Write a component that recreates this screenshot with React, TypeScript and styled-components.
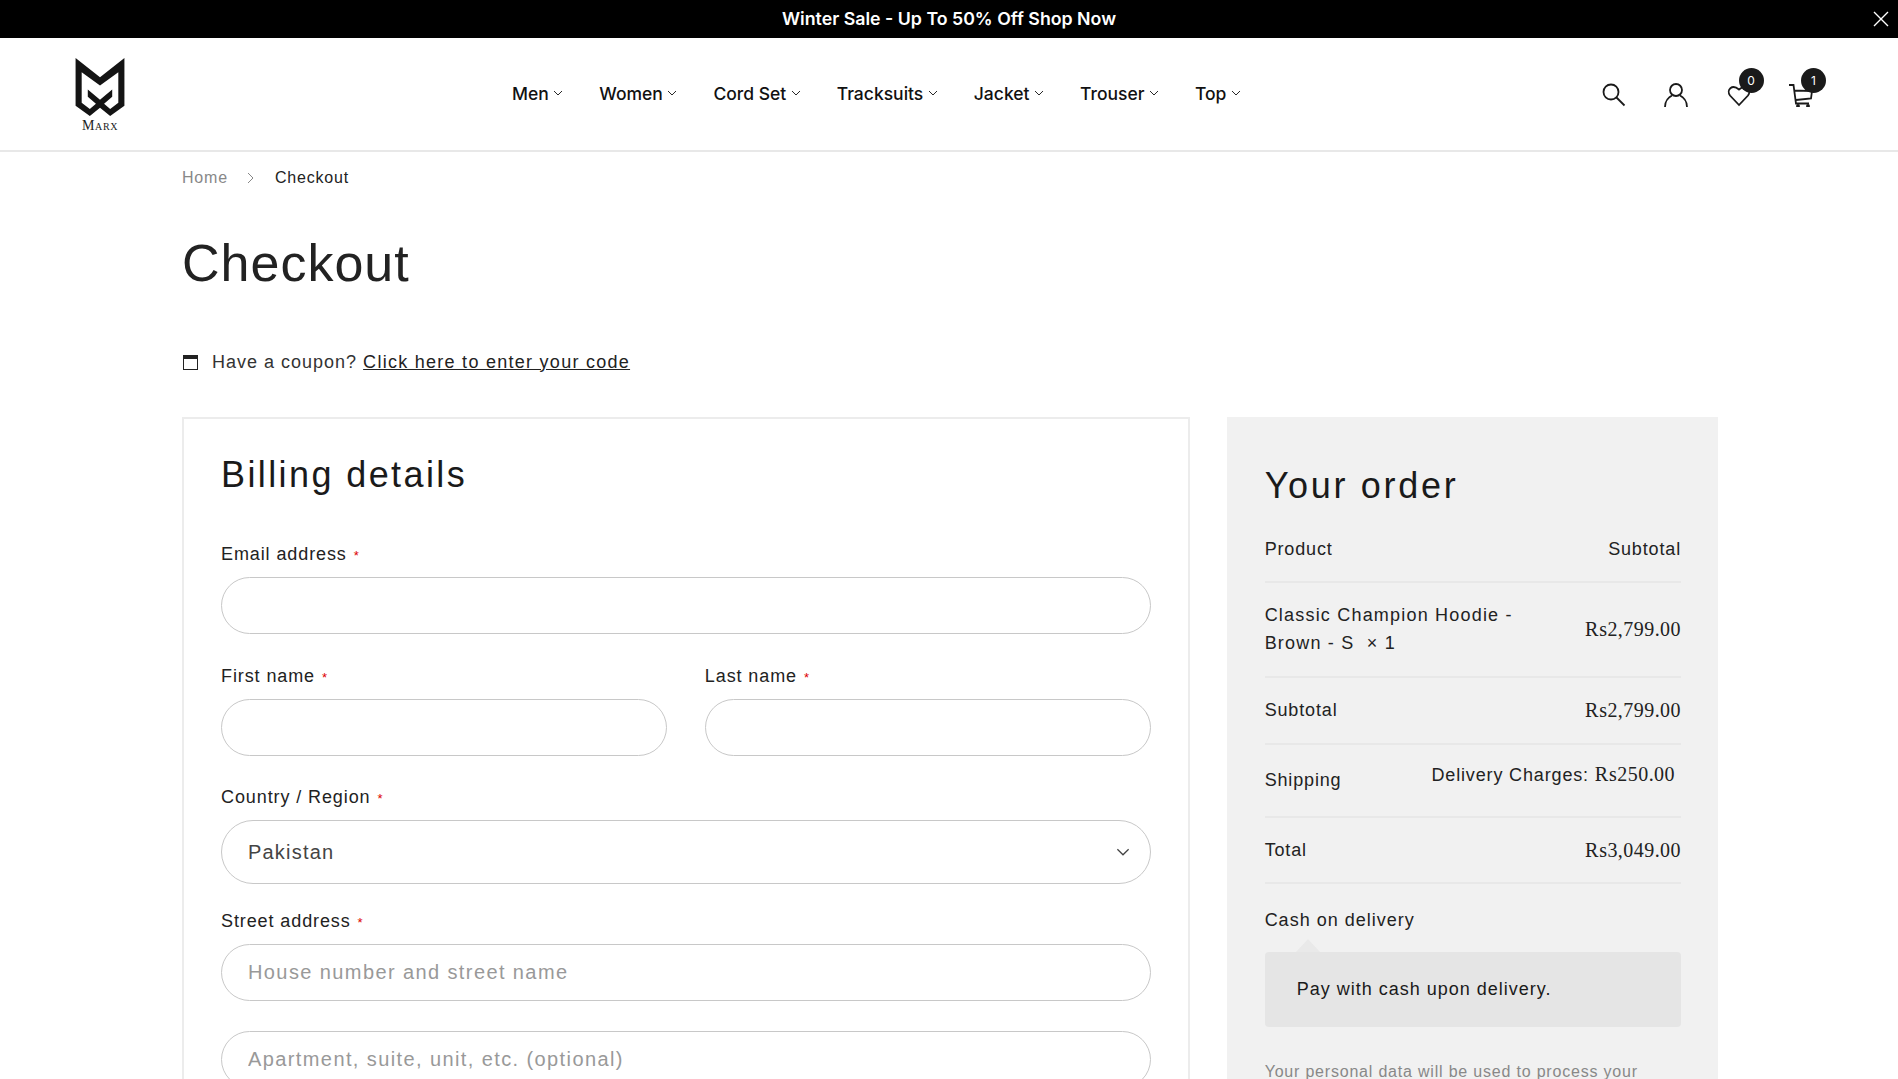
import React from "react";
import styled, { createGlobalStyle } from "styled-components";

const Global = createGlobalStyle`
  html, body { margin: 0; padding: 0; height: 100%; overflow: hidden; background: #fff; }
  body { font-family: "Liberation Sans", Arial, sans-serif; color: #1a1a1a; }
  * { box-sizing: border-box; }
`;

const TopBar = styled.div`
  height: 38px; background: #000; color: #fff; display: flex; align-items: center; justify-content: center;
  position: relative; font-family: "Inter", sans-serif; font-weight: 600; font-size: 17.75px; padding-bottom: 2px;
`;
const Close = styled.button`
  position: absolute; right: 9px; top: 11px; width: 16px; height: 16px; padding: 0; border: 0; background: none; color: #fff; display: flex;
`;
const Header = styled.header`
  height: 114px; border-bottom: 2px solid #e8e8e8; display: flex; align-items: center; padding: 0 85px 0 75px;
`;
const LogoWrap = styled.div`
  width: 50px; display: flex; flex-direction: column; align-items: center;
`;
const LogoText = styled.span`
  font-family: "Liberation Serif", serif; font-size: 14px; color: #222; letter-spacing: .6px; margin-top: 4px; line-height: 11px; font-variant: small-caps;
`;
const Nav = styled.nav`
  display: flex; gap: 36px; margin-left: 387px; flex: 1; padding-bottom: 2px;
`;
const NavItem = styled.a`
  display: flex; align-items: center; gap: 4.5px; font-family: "Inter", sans-serif; font-size: 17.5px; font-weight: 500; color: #111;
`;
const Icons = styled.div`
  display: flex; gap: 38.5px; align-items: center; margin-top: 1px;
`;
const IconBox = styled.div`
  position: relative; width: 24px; height: 24px; color: #1a1a1a;
`;
const Badge = styled.span`
  position: absolute; left: 12px; top: -15px; width: 25px; height: 25px; border-radius: 50%; background: #1a1a1a; color: #fff; font-size: 12px;
  display: flex; align-items: center; justify-content: center; font-family: "Inter", sans-serif;
`;
const Container = styled.main`
  width: 1536px; margin-left: 182px;
`;
const Crumbs = styled.div`
  display: flex; align-items: center; height: 52px; font-size: 16px; gap: 18.5px; color: #888; letter-spacing: .8px;
`;
const Current = styled.span` color: #222; `;
const Title = styled.h1`
  font-size: 52px; font-weight: 400; margin: 19px 0 0; line-height: 80px; color: #222; letter-spacing: 1px;
`;
const Coupon = styled.div`
  display: flex; align-items: center; margin-top: 44px; height: 30px; font-size: 18px; color: #333; letter-spacing: 1px;
`;
const CouponIcon = styled.span`
  width: 15px; height: 15px; border: 1.5px solid #222; border-top-width: 4px; margin: 0 14px 0 1px;
`;
const Link = styled.a`
  text-decoration: underline; color: #222; margin-left: 6px; letter-spacing: 1.27px;
`;
const Columns = styled.div`
  display: flex; gap: 37px; margin-top: 40px; align-items: flex-start;
`;
const Billing = styled.section`
  width: 1009px; border: 2px solid #ececec; padding: 32px 37px 40px; height: 900px;
`;
const H2 = styled.h2`
  font-size: 36px; font-weight: 400; margin: 0; line-height: 48px; letter-spacing: 2.4px; color: #1a1a1a;
`;
const Label = styled.label`
  display: block; font-size: 18px; line-height: 26px; color: #222; margin-bottom: 8px; letter-spacing: .9px;
`;
const Req = styled.span`
  color: #d00; font-size: 13px; margin-left: 1px;
`;
const Field = styled.div<{ $mt?: number }>`
  margin-top: ${(p) => p.$mt ?? 30}px; flex: 1;
`;
const Row = styled.div`
  display: flex; gap: 38px;
`;
const Input = styled.input`
  width: 100%; height: 57px; border: 1px solid #c8c8c8; border-radius: 30px; padding: 0 26px; font: inherit; font-size: 20px; letter-spacing: 1.4px; outline: none; display: block;
  &::placeholder { color: #999; opacity: 1; }
`;
const Select = styled.div`
  height: 64px; border: 1px solid #c8c8c8; border-radius: 32px; padding: 0 20px 0 26px; font-size: 20px; letter-spacing: 1.2px; color: #444;
  display: flex; align-items: center; justify-content: space-between;
`;
const Order = styled.aside`
  width: 492px; background: #f1f1f1; padding: 38px 37px 0 38px; height: 900px;
`;
const OrderTitle = styled.h2`
  font-size: 36px; font-weight: 400; margin: 0; line-height: 62px; letter-spacing: 2.7px;
`;
const ORow = styled.div<{ $h: number }>`
  height: ${(p) => p.$h}px; border-bottom: 2px solid #e8e8e8; display: flex; justify-content: space-between; align-items: center; font-size: 18px; color: #222; letter-spacing: .85px;
`;
const Item = styled.div`
  width: 270px; line-height: 28px; letter-spacing: 1.2px; margin-top: -2px;
`;
const Price = styled.span`
  font-family: "Liberation Serif", serif; font-size: 20px; letter-spacing: .45px;
`;
const Delivery = styled.div`
  margin: -12px 6px 0 0;
`;
const Cash = styled.div`
  margin-top: 22px; font-size: 18px; line-height: 28px; letter-spacing: 1px; color: #222;
`;
const PayBox = styled.div`
  margin-top: 18px; height: 75px; background: #e5e5e5; border-radius: 4px; display: flex; align-items: center; padding-left: 32px; font-size: 18px; letter-spacing: 1px; position: relative;
  &::before {
    content: ""; position: absolute; top: -13px; left: 31px; width: 0; height: 0;
    border-left: 12px solid transparent; border-right: 12px solid transparent; border-bottom: 13px solid #e9e9e9;
  }
`;
const Privacy = styled.p`
  margin: 31px 0 0; font-size: 16px; line-height: 28px; color: #888; letter-spacing: .8px;
`;

const Chevron = ({ s = 10 }: { s?: number }) => (
  <svg width={s} height={s} viewBox="0 0 10 10" fill="none" stroke="currentColor" strokeWidth="0.9"><path d="M1 3l4 4 4-4" /></svg>
);
const ChevronRight = () => (
  <svg width="10" height="12" viewBox="0 0 10 12" fill="none" stroke="currentColor" strokeWidth="1"><path d="M2 1l5 5-5 5" /></svg>
);

const nav = ["Men", "Women", "Cord Set", "Tracksuits", "Jacket", "Trouser", "Top"];

export default function App() {
  return (
    <>
      <Global />
      <TopBar>
        Winter Sale - Up To 50% Off Shop Now
        <Close aria-label="Close"><svg width="16" height="16" viewBox="0 0 16 16" stroke="currentColor" strokeWidth="1.4"><path d="M1 1l14 14M15 1L1 15" /></svg></Close>
      </TopBar>
      <Header>
        <LogoWrap>
          <svg width="50" height="58" viewBox="0 0 48 57" fill="#141414">
            <path fillRule="evenodd" d="M0 0L24 19L48 0V47L34 57L24 49L14 57L0 47ZM6 14V44L14 50L20 45L12 38V31L24 41L36 31V38L28 45L34 50L42 44V14L24 27Z" />
          </svg>
          <LogoText>Marx</LogoText>
        </LogoWrap>
        <Nav>
          {nav.map((n) => (
            <NavItem key={n}>{n}<Chevron /></NavItem>
          ))}
        </Nav>
        <Icons>
          <IconBox>
            <svg width="24" height="24" viewBox="0 0 24 24" fill="none" stroke="currentColor" strokeWidth="1.8"><circle cx="9" cy="9" r="7.500" /><path d="M14.500 14.500l8 8" /></svg>
          </IconBox>
          <IconBox>
            <svg width="24" height="24" viewBox="0 0 24 24" fill="none" stroke="currentColor" strokeWidth="1.8"><circle cx="12" cy="7" r="6" /><path d="M1 24c0-6 4-10 7-11.500M23 24c0-6-4-10-7-11.500" /></svg>
          </IconBox>
          <IconBox>
            <svg width="24" height="24" viewBox="0 0 24 24" fill="none" stroke="currentColor" strokeWidth="1.8"><path d="M12 22L3 12.500C-1 7 5 0.500 12 6.500c7-6 13 0.500 9 6Z" /></svg>
            <Badge>0</Badge>
          </IconBox>
          <IconBox>
            <svg width="24" height="24" viewBox="0 0 24 24" fill="none" stroke="currentColor" strokeWidth="1.8"><path d="M0 2h4.500l2.500 18.500h13M5.500 7.500L23 8l-1 7.500-15 1.500" /><circle cx="9" cy="23" r="1" /><circle cx="19" cy="23" r="1" /></svg>
            <Badge>1</Badge>
          </IconBox>
        </Icons>
      </Header>
      <Container>
        <Crumbs>Home<ChevronRight /><Current>Checkout</Current></Crumbs>
        <Title>Checkout</Title>
        <Coupon><CouponIcon />Have a coupon?<Link>Click here to enter your code</Link></Coupon>
        <Columns>
          <Billing>
            <H2>Billing details</H2>
            <Field $mt={42}><Label>Email address <Req>*</Req></Label><Input /></Field>
            <Row>
              <Field $mt={29}><Label>First name <Req>*</Req></Label><Input /></Field>
              <Field $mt={29}><Label>Last name <Req>*</Req></Label><Input /></Field>
            </Row>
            <Field $mt={28}><Label>Country / Region <Req>*</Req></Label><Select>Pakistan<Chevron s={14} /></Select></Field>
            <Field $mt={24}><Label>Street address <Req>*</Req></Label><Input placeholder="House number and street name" /></Field>
            <Field><Input placeholder="Apartment, suite, unit, etc. (optional)" /></Field>
          </Billing>
          <Order>
            <OrderTitle>Your order</OrderTitle>
            <ORow $h={66}><span>Product</span><span>Subtotal</span></ORow>
            <ORow $h={95}><Item>Classic Champion Hoodie - Brown - S&nbsp; × 1</Item><Price>₨2,799.00</Price></ORow>
            <ORow $h={67}><span>Subtotal</span><Price>₨2,799.00</Price></ORow>
            <ORow $h={73}><span>Shipping</span><Delivery>Delivery Charges: <Price>₨250.00</Price></Delivery></ORow>
            <ORow $h={66}><span>Total</span><Price>₨3,049.00</Price></ORow>
            <Cash>Cash on delivery</Cash>
            <PayBox>Pay with cash upon delivery.</PayBox>
            <Privacy>Your personal data will be used to process your order.</Privacy>
          </Order>
        </Columns>
      </Container>
    </>
  );
}
